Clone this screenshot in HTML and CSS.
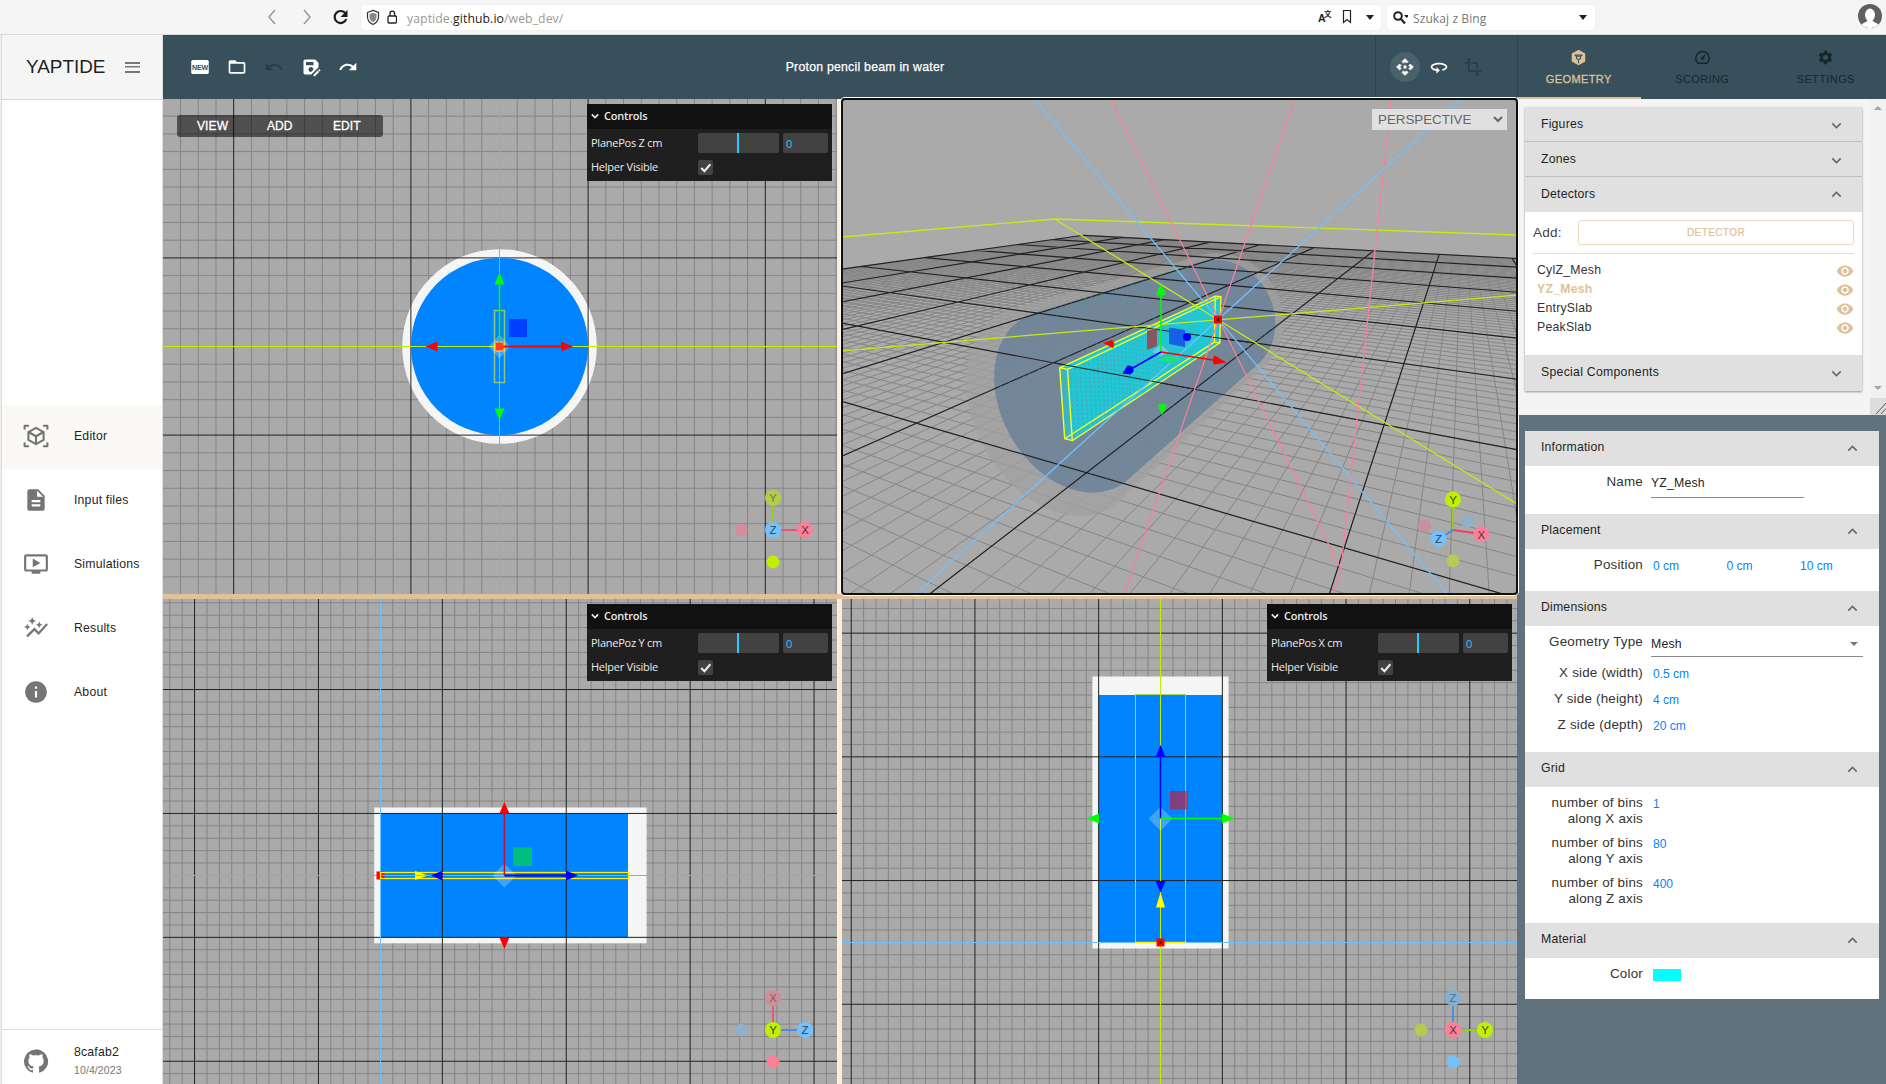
FILE: index.html
```html
<!DOCTYPE html>
<html lang="en">
<head>
<meta charset="utf-8">
<title>YAPTIDE</title>
<link rel="stylesheet" href="styles.css">
</head>
<body>
<svg class="defs" aria-hidden="true">
  <symbol id="i-down" viewBox="0 0 24 24"><path d="M16.59 8.59 12 13.17 7.41 8.59 6 10l6 6 6-6z"/></symbol>
  <symbol id="i-up" viewBox="0 0 24 24"><path d="M12 8l-6 6 1.41 1.41L12 10.83l4.59 4.58L18 14z"/></symbol>
  <symbol id="i-eye" viewBox="0 0 24 24"><path d="M12 4.5C7 4.5 2.73 7.61 1 12c1.73 4.39 6 7.5 11 7.5s9.27-3.11 11-7.5c-1.73-4.39-6-7.5-11-7.5zM12 17c-2.76 0-5-2.24-5-5s2.24-5 5-5 5 2.24 5 5-2.24 5-5 5zm0-8c-1.66 0-3 1.34-3 3s1.34 3 3 3 3-1.34 3-3-1.34-3-3-3z"/></symbol>
</svg>

<header class="browser">
  <svg class="nav-icons" viewBox="0 0 100 34">
    <path class="dim" d="M14 10l-6 7 6 7M43 10l6 7-6 7"/>
    <path class="dark" d="M84.500 13.500a6 6 0 1 0 .8 5.500"/><path class="solid" d="M86.500 10v7h-7z"/>
  </svg>
  <div class="url">
    <svg viewBox="0 0 36 24" width="36" height="24">
      <path d="M6.500 6.500l5.500-2 5.500 2v4.500c0 4-2.500 6-5.500 7.500-3-1.500-5.500-3.500-5.500-7.500z" fill="#fff" stroke="#333" stroke-width="1.200"/>
      <path d="M8.500 8l3.500-1.300L15.500 8v3c0 2.600-1.600 4.200-3.500 5.300C10.100 15.200 8.500 13.600 8.500 11z" fill="#888"/>
      <rect x="27" y="10" width="8.500" height="7" rx="1" fill="none" stroke="#222" stroke-width="1.300"/>
      <path d="M29 10V7.500a2.300 2.300 0 0 1 4.600 0V10" fill="none" stroke="#222" stroke-width="1.300"/>
    </svg>
    <span class="addr">yaptide.<b>github.io</b>/web_dev/</span>
    <svg class="url-tools" viewBox="0 0 64 24" width="64" height="24">
      <text x="1" y="16" class="tr1">A</text><text x="7" y="11" class="tr2">文</text>
      <path d="M26.500 4.500h7v12l-3.500-3-3.500 3z" fill="none" stroke="#222" stroke-width="1.200"/>
      <path d="M49 9h8l-4 5z" fill="#222"/>
    </svg>
  </div>
  <div class="search">
    <svg viewBox="0 0 20 24" width="20" height="24"><circle cx="10" cy="10" r="3.800" fill="none" stroke="#222" stroke-width="2"/><path d="M13 13l4 4.500" stroke="#222" stroke-width="2.200"/><path d="M16 9h5l-2.500 3z" fill="#222"/></svg>
    <span>Szukaj z Bing</span>
    <svg class="caret" viewBox="0 0 10 24" width="10" height="24"><path d="M1 9h8l-4 5z" fill="#222"/></svg>
  </div>
  <svg class="avatar" viewBox="0 0 24 24"><circle cx="12" cy="12" r="12" fill="#5f5f5f"/><ellipse cx="12" cy="11" rx="5" ry="6.500" fill="#fff"/><path d="M3.500 20.500c3-2.500 5-2.500 6-4h5c1 1.500 3 1.500 6 4a12 12 0 0 1-17 0z" fill="#fff"/></svg>
</header>

<div class="app">
  <aside class="side">
    <div class="brand"><span>YAPTIDE</span><i class="burger"></i></div>
    <nav>
      <a class="on"><svg viewBox="0 0 24 24"><g fill="none" stroke="currentColor" stroke-width="1.900"><path d="M1.500 6V2.500H5.500M18.500 2.500h4V6M22.500 18v3.500h-4M5.500 21.500h-4V18" stroke-linejoin="round"/><path d="M12 4.500l7 3.800v7.400l-7 3.800-7-3.800V8.300zM5 8.300l7 3.900 7-3.900M12 12v7.500"/></g></svg>Editor</a>
      <a><svg viewBox="0 0 24 24"><path d="M14 2H6c-1.100 0-1.990.9-1.990 2L4 20c0 1.100.89 2 1.990 2H18c1.100 0 2-.9 2-2V8l-6-6zm2 16H8v-2h8v2zm0-4H8v-2h8v2zm-3-5V3.500L18.500 9H13z"/></svg>Input files</a>
      <a><svg viewBox="0 0 24 24"><path d="M21 3H3c-1.110 0-2 .89-2 2v12c0 1.100.89 2 2 2h5v2h8v-2h5c1.100 0 1.990-.9 1.990-2L23 5c0-1.110-.9-2-2-2zm0 14H3V5h18v12zm-5-6l-7 4V7z"/></svg>Simulations</a>
      <a><svg viewBox="0 0 24 24"><path d="M14.060 9.940 12 9l2.060-.94L15 6l.94 2.060L18 9l-2.060.94L15 12zM4 14l.94-2.060L7 11l-2.060-.94L4 8l-.94 2.060L1 11l2.060.94zm4.500-5 1.090-2.410L12 5.500 9.590 4.410 8.500 2 7.410 4.410 5 5.500l2.410 1.090zm-4 11.500 6-6.010 4 4L23 8.930l-1.410-1.410-7.090 7.970-4-4L3 19z"/></svg>Results</a>
      <a><svg viewBox="0 0 24 24"><path d="M12 2C6.480 2 2 6.480 2 12s4.480 10 10 10 10-4.480 10-10S17.520 2 12 2zm1 15h-2v-6h2v6zm0-8h-2V7h2v2z"/></svg>About</a>
    </nav>
    <div class="build">
      <svg viewBox="0 0 24 24"><path d="M12 1.270a11 11 0 00-3.480 21.460c.55.09.73-.28.73-.55v-1.840c-3.030.64-3.670-1.460-3.670-1.460-.55-1.290-1.280-1.650-1.280-1.650-.92-.65.1-.65.1-.65 1.100 0 1.730 1.100 1.730 1.100.92 1.650 2.570 1.200 3.210.92a2 2 0 01.64-1.470c-2.470-.27-5.040-1.190-5.040-5.500 0-1.100.46-2.100 1.200-2.840a3.760 3.760 0 010-2.930s.91-.28 3.110 1.100c1.800-.49 3.700-.49 5.500 0 2.100-1.380 3.020-1.100 3.020-1.100a3.760 3.760 0 01.1 2.930c.83.74 1.200 1.740 1.200 2.940 0 4.210-2.570 5.130-5.040 5.400.45.37.82.92.82 2.020v3.030c0 .27.1.64.73.55A11 11 0 0012 1.270"/></svg>
      <div><p>8cafab2</p><p class="date">10/4/2023</p></div>
    </div>
  </aside>

  <main class="editor">
    <div class="toolbar">
      <div class="file-tools">
        <svg viewBox="0 0 24 24"><rect x="1.500" y="3.500" width="21" height="17" rx="2"/><text x="12" y="15.200" class="new">NEW</text></svg>
        <svg viewBox="0 0 24 24"><path d="M20 6h-8l-2-2H4c-1.100 0-1.990.9-1.990 2L2 18c0 1.100.9 2 2 2h16c1.100 0 2-.9 2-2V8c0-1.100-.9-2-2-2zm0 12H4V8h16v10z"/></svg>
        <svg class="off" viewBox="0 0 24 24"><path d="M12.500 8c-2.650 0-5.050.99-6.900 2.600L2 7v9h9l-3.620-3.620c1.390-1.160 3.160-1.880 5.120-1.880 3.540 0 6.550 2.310 7.600 5.500l2.370-.78C21.080 11.030 17.150 8 12.500 8z"/></svg>
        <svg viewBox="0 0 24 24"><path d="M21 12.400V7l-4-4H5c-1.110 0-2 .9-2 2v14c0 1.100.89 2 2 2h7.400l8.600-8.600zM15 15c0 .02 0 .04 0 .06L12.060 18c-.02 0-.04 0-.06 0-1.660 0-3-1.340-3-3s1.340-3 3-3 3 1.340 3 3zM6 6h9v4H6V6zm13.990 10.250 1.770 1.770L16.770 23H15v-1.770l4.990-4.980zm3.260.26-.85.85-1.770-1.770.85-.85c.2-.2.51-.2.71 0l1.060 1.060c.2.2.2.52 0 .71z"/></svg>
        <svg viewBox="0 0 24 24"><path d="M18.400 10.600C16.550 8.990 14.150 8 11.500 8c-4.650 0-8.580 3.030-9.960 7.220L3.900 16c1.050-3.190 4.050-5.500 7.600-5.500 1.950 0 3.730.72 5.120 1.880L13 16h9V7l-3.600 3.600z"/></svg>
      </div>
      <h1>Proton pencil beam in water</h1>
      <div class="mode-tools">
        <span class="active"><svg viewBox="0 0 24 24"><path d="M15.540 5.540L13.770 7.300 12 5.540 10.230 7.300 8.460 5.540 12 2zm2.920 10l-1.760-1.770L18.460 12l-1.760-1.770 1.760-1.770L22 12zm-10 2.920l1.770-1.760L12 18.460l1.770-1.760 1.770 1.760L12 22zm-2.920-10l1.760 1.770L5.540 12l1.760 1.770-1.760 1.770L2 12z" stroke="currentColor" stroke-width="1"/><circle cx="12" cy="12" r="2"/></svg></span>
        <span><svg viewBox="0 0 24 24"><path d="M12 7C6.480 7 2 9.240 2 12c0 2.240 2.940 4.130 7 4.770V20l4-4-4-4v2.730c-3.150-.56-5-1.900-5-2.730 0-1.060 3.040-3 8-3s8 1.940 8 3c0 .73-1.460 1.890-4 2.530v2.050c3.530-.77 6-2.530 6-4.580 0-2.760-4.480-5-10-5z"/></svg></span>
        <span class="off"><svg viewBox="0 0 24 24"><path d="M22 18v-2H8V4h2L7 1 4 4h2v2H2v2h4v8c0 1.100.9 2 2 2h8v2h-2l3 3 3-3h-2v-2h4zM10 8h6v6h2V8c0-1.100-.9-2-2-2h-6v2z"/></svg></span>
      </div>
    </div>

    <div class="views">
      <section class="view">
        <svg viewBox="163 99 674 495">
          <g data-grid="499.500 346.500 17.720"></g>
          <circle cx="499.500" cy="346.500" r="97.300" fill="#f5f5f5"/>
          <g data-major="499.500 346.500 17.720"></g>
          <circle cx="499.500" cy="346.500" r="88.600" fill="#0084ff"/>
          <path d="M499.500 99v495" stroke="#fb7f9b"/>
          <path d="M163 346.500h674" stroke="#bdef00"/>
          <rect x="494.500" y="310.500" width="10" height="72" fill="none" stroke="#8cc878" stroke-width="1.500"/>
          <rect x="509" y="319" width="18" height="18" fill="#0040ff"/>
          <path d="M499.500 334.500l11 12-11 12-11-12z" fill="#fff" opacity=".25"/>
          <path d="M494 346l2-4h7l2 4-2 5h-7z" fill="#ffd9a0" stroke="#fff000"/>
          <path d="M499.500 346V284" stroke="#0f0" stroke-width="1.500"/><path d="M499.500 273l5 11.500h-10zM499.500 420l5-11.500h-10z" fill="#0f0"/>
          <path d="M499.500 346.500H562" stroke="red" stroke-width="2"/><path d="M573 346.500l-12-5v10zM425.500 346.500l12-5v10z" fill="red"/>
          <rect x="495.500" y="342.500" width="8" height="8" fill="#ff3b30"/>
          <g class="axes"><path d="M773 530V498" stroke="#8ed01a"/><path d="M773 530h32" stroke="#f2506e"/>
            <circle cx="741" cy="530" r="6.500" fill="#d48d9c"/><circle cx="773" cy="562" r="6.500" fill="#c0ef00"/>
            <circle cx="773" cy="498" r="8" fill="#b5cb4c"/><circle cx="805" cy="530" r="8" fill="#ff7f98"/><circle cx="773" cy="530" r="8" fill="#73c2ff"/>
            <text class="far" x="773" y="502.300">Y</text><text x="805" y="534.300">X</text><text x="773" y="534.300">Z</text></g>
        </svg>
        <div class="view-menu"><span>VIEW</span><span>ADD</span><span>EDIT</span></div>
        <div class="gui"><h2><svg viewBox="0 0 10 10"><path d="M1 3l4 4 4-4"/></svg>Controls</h2><div class="row"><label>PlanePos Z cm</label><i class="slider"></i><i class="num">0</i></div><div class="row"><label>Helper Visible</label><i class="check"><svg viewBox="0 0 14 14"><path d="M3 7.500l3 3 5.500-6.500"/></svg></i></div></div>
      </section>
      <i class="split-v"></i>
      <section class="view focus">
        <svg viewBox="842 99 675 495">
          <g id="scene"></g>
          <g fill="none" stroke="#c3ec10" stroke-width="1.300"><path d="M842 237l212.700-18L1517 235M1054.700 219L1517 504M842 350.800L1517 295.200"/></g>
          <g fill="none" stroke="#fb7f9b" stroke-width="1.250"><path d="M1111 99l229.900 470.300M1294.300 99L1124.500 594M1391.300 99l-50.400 470.300-8 25"/></g>
          <g fill="none" stroke="#70c2ff" stroke-width="1.300"><path d="M1034.500 99L1447.500 594M1461 99L916 594"/></g>
          <g id="gizmo">
            <path d="M1147 331l10-3v18l-10 4z" fill="#8b5560"/><path d="M1169 327.500l16 2.500v17l-16-3z" fill="#1460e6"/>
            <path d="M1157 360l10-4 15 2-10 5z" fill="#1fe07a"/><path d="M1152 352l9-8 8 8-8 4z" fill="#7fd7e4" opacity=".7"/>
            <path d="M1161 352V295" stroke="#0f0" stroke-width="1.600"/><path d="M1161 284l5 10q-5 3-10 0zM1162 415l5-10q-5-2-9 0z" fill="#0f0"/>
            <path d="M1161 352l52 8" stroke="red" stroke-width="1.600"/><path d="M1226.500 362.500l-12-7q-3 5-.5 9zM1103 343l9-3q4 3 1 8z" fill="red"/>
            <path d="M1161 352l-30 17" stroke="#00f" stroke-width="1.600"/><path d="M1122.500 373.500l5-8q7-1 6 6l-3 3z" fill="#00f"/><ellipse cx="1187" cy="337" rx="4" ry="4" fill="#00f"/>
            <rect x="1214" y="315.500" width="8" height="8" fill="red"/><rect x="1216.700" y="318.200" width="2.500" height="3" fill="#300"/>
          </g>
          <g class="axes"><path d="M1453 530v-30" stroke="#8ed01a"/><path d="M1453 530l28 4" stroke="#f2405e"/><path d="M1453 530l-14 9" stroke="#3a8fe8"/>
            <circle cx="1424.600" cy="525.700" r="6.500" fill="#c98f9b"/><circle cx="1467.600" cy="521.700" r="6.500" fill="#8fb0c8"/><circle cx="1453" cy="560.700" r="6.500" fill="#b5cb55"/>
            <circle cx="1453" cy="499.500" r="8" fill="#c0ef00"/><circle cx="1481.300" cy="534.300" r="8" fill="#ff7f98"/><circle cx="1438.600" cy="538.700" r="8" fill="#73c2ff"/>
            <text x="1453" y="503.800">Y</text><text x="1481.300" y="538.600">X</text><text x="1438.600" y="543">Z</text></g>
        </svg>
        <div class="camera">PERSPECTIVE<svg viewBox="0 0 10 10"><path d="M1 3l4 4 4-4"/></svg></div>
      </section>

      <i class="split-h"></i>

      <section class="view">
        <svg viewBox="163 599 674 485">
          <g data-grid="380.400 875.400 12.390"></g>
          <rect x="374.200" y="807.500" width="272.400" height="135.800" fill="#f5f5f5"/>
          <rect x="380.500" y="813.500" width="247.500" height="124" fill="#0084ff"/>
          <g data-major="380.400 875.400 12.390"></g>
          <path d="M163 875.500h674" stroke="#fb7f9b"/><path d="M380.500 599v485" stroke="#70c2ff"/>
          <rect x="376.500" y="871.500" width="8" height="8" fill="red"/>
          <rect x="380.500" y="872.500" width="248" height="6" fill="none" stroke="#fff000" stroke-width="1.300"/>
          <path d="M428 875.500l-13-4.500v9z" fill="#ff0"/>
          <path d="M381 875.500h247" stroke="#b39bc8" stroke-width=".8"/>
          <rect x="513.500" y="847.500" width="18.500" height="18.500" fill="#00c080"/>
          <path d="M504.400 863.500l12 12-12 12-12-12z" fill="#fff" opacity=".25"/>
          <path d="M504.400 875V813" stroke="#c01030" stroke-width="1.500"/><path d="M504.400 802l5 11.500h-10zM504.400 949l5-11.500h-10z" fill="red"/>
          <path d="M504.400 875.500H567" stroke="#0000e0" stroke-width="2"/><path d="M578 875.500l-12-5v10zM431 875.500l11.500-5v10z" fill="#00f"/>
          <g class="axes"><path d="M773 1030v-32" stroke="#e65a74"/><path d="M773 1030h32" stroke="#4a90e2"/>
            <circle cx="741" cy="1030" r="6.500" fill="#8fb0c8"/><circle cx="773" cy="1062" r="6.500" fill="#ff7f98"/>
            <circle cx="773" cy="998" r="8" fill="#cf8d9b"/><circle cx="805" cy="1030" r="8" fill="#73c2ff"/><circle cx="773" cy="1030" r="8" fill="#c0ef00"/>
            <text class="far" x="773" y="1002.300">X</text><text x="805" y="1034.300">Z</text><text x="773" y="1034.300">Y</text></g>
        </svg>
        <div class="gui"><h2><svg viewBox="0 0 10 10"><path d="M1 3l4 4 4-4"/></svg>Controls</h2><div class="row"><label>PlanePoz Y cm</label><i class="slider"></i><i class="num">0</i></div><div class="row"><label>Helper Visible</label><i class="check"><svg viewBox="0 0 14 14"><path d="M3 7.500l3 3 5.500-6.500"/></svg></i></div></div>
      </section>
      <i class="split-v"></i>
      <section class="view">
        <svg viewBox="842 599 675 485">
          <g data-grid="1160.500 942.400 12.370"></g>
          <rect x="1092.400" y="676.500" width="136.200" height="272" fill="#f5f5f5"/>
          <rect x="1098.500" y="695" width="124" height="247.500" fill="#0084ff"/>
          <g data-major="1160.500 942.400 12.370"></g>
          <path d="M842 942.500h675" stroke="#70c2ff"/>
          <path d="M1160.500 599v485" stroke="#bdef00"/>
          <rect x="1135.500" y="694.500" width="50" height="248" fill="none" stroke="#a8dc50"/><path d="M1135 942.500h51" stroke="#fff000" stroke-width="1.400"/>
          <rect x="1156.500" y="938.500" width="8" height="8" fill="red"/><rect x="1159.500" y="941.500" width="2" height="2" fill="#400"/>
          <rect x="1170" y="791" width="18" height="18.300" fill="#80407f"/><path d="M1186 791v18" stroke="#d86040"/>
          <path d="M1160.500 806.700l12 12-12 12-12-12z" fill="#fff" opacity=".25"/>
          <path d="M1160.500 818.500V757" stroke="#0000e0" stroke-width="1.500"/><path d="M1160.500 745l5 12h-10zM1160.500 892.500l5-11.500h-10z" fill="#00f"/>
          <path d="M1160.500 892.500l4.500 15h-9z" fill="#ff0"/>
          <path d="M1160.500 818.500H1223" stroke="#0f0" stroke-width="1.700"/><path d="M1234.500 818.500l-12.500-5v10zM1087 818.500l12-5v10z" fill="#0f0"/>
          <g class="axes"><path d="M1453 1030v-32" stroke="#4a90e2"/><path d="M1453 1030h32" stroke="#8ed01a"/>
            <circle cx="1421" cy="1030" r="6.500" fill="#b5cb4c"/><circle cx="1453" cy="1062" r="6.500" fill="#73c2ff"/>
            <circle cx="1453" cy="998" r="8" fill="#84afd0"/><circle cx="1485" cy="1030" r="8" fill="#c0ef00"/><circle cx="1453" cy="1030" r="8" fill="#ff7f98"/>
            <text class="far" x="1453" y="1002.300">Z</text><text x="1485" y="1034.300">Y</text><text x="1453" y="1034.300">X</text></g>
        </svg>
        <div class="gui"><h2><svg viewBox="0 0 10 10"><path d="M1 3l4 4 4-4"/></svg>Controls</h2><div class="row"><label>PlanePos X cm</label><i class="slider"></i><i class="num">0</i></div><div class="row"><label>Helper Visible</label><i class="check"><svg viewBox="0 0 14 14"><path d="M3 7.500l3 3 5.500-6.500"/></svg></i></div></div>
      </section>
    </div>
  </main>

  <aside class="panel">
    <div class="tabs">
      <div class="tab sel"><svg viewBox="0 0 24 24"><path d="M12 1l9.500 5.300v11.400L12 23l-9.500-5.300V6.300z"/><path d="M6.500 8.500l3 2M17.500 8.500l-3 2M12 20v-5M9.300 10.300h5.400l.3 2.700-3 2.300-3-2.300zM6.500 8.500h11" fill="none" stroke="#38505c" stroke-width="1.500"/></svg>GEOMETRY</div>
      <div class="tab"><svg viewBox="0 0 24 24"><path d="M5.500 20a9.500 9.500 0 1 1 13 0z" fill="none" stroke="currentColor" stroke-width="2" stroke-linejoin="round"/><path d="M10.300 14.500a2 2 0 0 0 3 0L17 7l-6.500 4.700a2 2 0 0 0-.2 2.800z"/></svg>SCORING</div>
      <div class="tab"><svg viewBox="0 0 24 24"><path d="M19.140 12.940c.04-.3.06-.61.06-.94 0-.32-.02-.64-.07-.94l2.030-1.580c.18-.14.23-.41.12-.61l-1.920-3.320c-.12-.22-.37-.29-.59-.22l-2.390.96c-.5-.38-1.030-.7-1.620-.94l-.36-2.540c-.04-.24-.24-.41-.48-.41h-3.840c-.24 0-.43.17-.47.41l-.36 2.540c-.59.24-1.130.57-1.620.94l-2.390-.96c-.22-.08-.47 0-.59.22L2.740 8.870c-.12.21-.08.47.12.61l2.030 1.580c-.05.3-.09.63-.09.94s.02.64.07.94l-2.030 1.580c-.18.14-.23.41-.12.61l1.920 3.320c.12.22.37.29.59.22l2.390-.96c.5.38 1.030.7 1.620.94l.36 2.540c.05.24.24.41.48.41h3.840c.24 0 .44-.17.47-.41l.36-2.540c.59-.24 1.130-.56 1.620-.94l2.390.96c.22.08.47 0 .59-.22l1.920-3.320c.12-.22.07-.47-.12-.61l-2.010-1.580zM12 15.600c-1.980 0-3.600-1.620-3.600-3.600s1.620-3.600 3.600-3.600 3.600 1.620 3.600 3.600-1.620 3.600-3.600 3.600z"/></svg>SETTINGS</div>
    </div>

    <div class="tree">
      <div class="cards">
        <h3 class="line">Figures<svg><use href="#i-down"/></svg></h3>
        <h3 class="line">Zones<svg><use href="#i-down"/></svg></h3>
        <h3>Detectors<svg><use href="#i-up"/></svg></h3>
        <div class="detectors">
          <div class="add"><span>Add:</span><button>DETECTOR</button></div>
          <ul>
            <li>CylZ_Mesh<svg><use href="#i-eye"/></svg></li>
            <li class="picked">YZ_Mesh<svg><use href="#i-eye"/></svg></li>
            <li>EntrySlab<svg><use href="#i-eye"/></svg></li>
            <li>PeakSlab<svg><use href="#i-eye"/></svg></li>
          </ul>
        </div>
        <h3 class="last">Special Components<svg><use href="#i-down"/></svg></h3>
      </div>
      <div class="scroll"><i class="up"></i><i class="dn"></i><svg viewBox="0 0 16 17"><path d="M6 16L16 5M11 16l5-5.500" stroke="#555" fill="none"/></svg></div>
    </div>

    <div class="props">
      <h3>Information<svg><use href="#i-up"/></svg></h3>
      <div class="body info"><label>Name</label><span class="input">YZ_Mesh</span></div>
      <h3>Placement<svg><use href="#i-up"/></svg></h3>
      <div class="body place"><label>Position</label><span class="vec"><b>0 cm</b><b>0 cm</b><b>10 cm</b></span></div>
      <h3>Dimensions<svg><use href="#i-up"/></svg></h3>
      <div class="body dims">
        <label>Geometry Type</label><span class="select">Mesh<i></i></span>
        <label>X side (width)</label><b>0.5 cm</b>
        <label>Y side (height)</label><b>4 cm</b>
        <label>Z side (depth)</label><b>20 cm</b>
      </div>
      <h3>Grid<svg><use href="#i-up"/></svg></h3>
      <div class="body bins">
        <label>number of bins<br>along X axis</label><b>1</b>
        <label>number of bins<br>along Y axis</label><b>80</b>
        <label>number of bins<br>along Z axis</label><b>400</b>
      </div>
      <h3>Material<svg><use href="#i-up"/></svg></h3>
      <div class="body mat"><label>Color</label><i class="swatch"></i></div>
    </div>
  </aside>
</div>
<script src="scene.js"></script>
</body>
</html>
```
FILE: styles.css
```css
* { box-sizing: border-box; margin: 0; padding: 0; }
html, body { height: 100%; overflow: hidden; }
body { display: flex; flex-direction: column; background: #f5f5f5; color: #1f1f1f; font: 12.25px "Liberation Sans", Arial, sans-serif; letter-spacing: .2px; }
i, b { font-style: normal; }
svg { display: block; flex: none; fill: currentColor; }
.defs { position: absolute; width: 0; height: 0; }

/* browser chrome */
.browser { height: 35px; flex: none; display: flex; align-items: flex-start; background: #f5f5f5; border-bottom: 1px solid #dadada; padding-left: 261px; font-family: "Open Sans", sans-serif; font-size: 12px; }
.nav-icons { width: 100px; height: 34px; fill: none; }
.nav-icons path { fill: none; stroke-width: 1.5; }
.nav-icons .dim { stroke: #999; }
.nav-icons .dark { stroke: #1c1c1c; stroke-width: 2.2; }
.nav-icons .solid { fill: #1c1c1c; }
.url, .search { height: 25px; margin-top: 5px; background: #fff; border-radius: 3px; box-shadow: 0 0 1px #ccc; display: flex; align-items: center; }
.url { width: 1020px; }
.addr { color: #999; margin-left: 10px; letter-spacing: .1px; font-size: 12.2px; padding-top: 1px; }
.addr b { font-weight: 400; color: #222; }
.url-tools { margin-left: auto; }
.tr1 { font: 700 10.5px "Liberation Sans", sans-serif; fill: #222; letter-spacing: 0; }
.tr2 { font: 700 7.5px "Noto Sans CJK SC", sans-serif; fill: #222; letter-spacing: 0; }
.search { width: 208px; margin-left: 6px; padding-left: 1px; }
.search span { color: #777; margin-left: 5px; letter-spacing: .1px; font-size: 12px; padding-top: 1px; }
.caret { margin-left: auto; margin-right: 7px; }
.avatar { width: 24px; height: 24px; margin: 4px 0 0 263px; }

.app { flex: 1; display: flex; min-height: 0; }

/* sidebar */
.side { width: 163px; display: flex; flex-direction: column; border-left: 1px solid #eee; background: #fff; border-right: 1px solid #ddd; box-shadow: inset 1px 0 #ddd; flex: none; }
.brand { height: 65px; background: #f5f5f5; border-bottom: 1px solid #d6d6d6; display: flex; align-items: center; padding-left: 25px; font-size: 18.9px; letter-spacing: 0; box-shadow: inset 1px 0 #ddd; }
.brand span { width: 99px; padding-bottom: 1px; }
.burger { width: 15px; height: 11px; border: solid #777; border-width: 2px 0; background: linear-gradient(#777, #777) center / 100% 1.5px no-repeat; }
.side nav { margin-top: 305px; padding-left: 1px; flex: 1; }
.side nav a { height: 64px; display: flex; align-items: center; padding: 0 0 3px 21px; }
.side nav a.on { background: #fbf9f6; }
.side svg { width: 26px; height: 26px; color: #757575; }
.side nav svg { margin-right: 25px; }
.build { height: 55px; border-top: 1px solid #ddd; display: flex; align-items: center; padding: 8px 0 0 22px; gap: 25px; }
.build p { line-height: 18px; }
.build .date { font-size: 10.5px; color: #777; letter-spacing: .1px; }

/* editor */
.editor { width: 1354px; flex: none; display: flex; flex-direction: column; }
.toolbar { height: 64px; background: #38505c; color: #fff; display: flex; align-items: center; flex: none; }
.file-tools { width: 205px; display: flex; gap: 17px; padding-left: 27px; }
.file-tools svg, .mode-tools svg { width: 20px; height: 20px; }
.toolbar .off { color: #2a3c45; }
.new { font: 700 8.6px "Liberation Sans", sans-serif; fill: #38505c; text-anchor: middle; letter-spacing: -.2px; }
.toolbar h1 { flex: 1; text-align: center; font-size: 12.25px; font-weight: 400; letter-spacing: .25px; padding: 0 13px 1px 0; -webkit-text-stroke: .25px; }
.mode-tools { width: 142px; height: 100%; border-left: 1px solid #2f444e; display: flex; align-items: center; padding-left: 14px; gap: 4px; }
.mode-tools span { width: 30px; height: 30px; border-radius: 50%; display: grid; place-items: center; }
.mode-tools .active { background: #4b616c; }

.views { flex: 1; display: grid; grid-template-columns: 674px 5px 675px; grid-template-rows: 495px 5px 485px; }
.view { position: relative; background: #aaa; }
.view > svg { width: 100%; height: 100%; overflow: hidden; }
.split-v { background: #ffecd9; }
.split-h { background: #e0c199; grid-column: 1 / 4; }
.focus::after { content: ""; position: absolute; inset: -1px; border: 2px solid #101010; border-radius: 4px; box-shadow: 0 0 0 1px #fff; z-index: 2; }
.axes path { stroke-width: 2; }
.axes text { font: 11.5px "Liberation Sans", sans-serif; letter-spacing: 0; text-anchor: middle; fill: #222; opacity: .8; }
.axes .far { opacity: .45; }

.view-menu { position: absolute; left: 14px; top: 16px; width: 206px; height: 22px; display: flex; align-items: center; border-radius: 3px; background: rgba(0,0,0,.53); color: #fff; font-size: 12px; letter-spacing: .1px; -webkit-text-stroke: .3px; }
.view-menu span:nth-child(1) { padding-left: 20px; width: 90px; }
.view-menu span:nth-child(2) { width: 66px; }

.gui { position: absolute; right: 5px; top: 5px; width: 245px; height: 77px; background: #1f1f1f; color: #ebebeb; font: 11px "Open Sans", "Noto Sans", sans-serif; letter-spacing: 0; }
.gui h2 { height: 25px; background: #111; font-size: 11px; font-weight: 600; display: flex; align-items: center; gap: 5px; padding: 0 0 2px 4px; letter-spacing: -.2px; }
.gui h2 svg { width: 8px; height: 10px; }
.gui path, .camera path { fill: none; stroke: currentColor; stroke-width: 2; }
.gui .row { display: flex; height: 20px; margin-top: 4px; align-items: center; padding-left: 4px; }
.gui label { width: 107px; letter-spacing: -.25px; padding-bottom: 2px; }
.slider { width: 81px; height: 20px; border-radius: 2px; background: linear-gradient(#2cc9ff, #2cc9ff) 39px 0 / 2px 100% no-repeat #424242; }
.num { width: 45px; height: 20px; margin-left: 4px; border-radius: 2px; background: #424242; color: #2cc9ff; padding-left: 3px; line-height: 21px; }
.check { width: 15px; height: 15px; border-radius: 2px; background: #424242; }
.gui .row + .row { height: 15px; margin-top: 7px; }
.camera { position: absolute; left: 530px; top: 10px; width: 135px; height: 21px; background: #e0e0e0; color: #666; font-size: 13.33px; letter-spacing: 0; display: flex; align-items: center; justify-content: space-between; padding: 0 4px 1px 6px; }
.camera svg { width: 10px; height: 10px; }

/* right panel */
.panel { flex: 1; background: #60737c; display: flex; flex-direction: column; }
.tabs { height: 64px; background: #38505c; display: flex; color: #17262d; flex: none; box-shadow: inset 1px 0 #2f444e; }
.tab { width: 123.5px; padding: 14px 0 0; display: flex; flex-direction: column; align-items: center; gap: 7px; font-size: 11px; letter-spacing: .4px; }
.tab svg { width: 17px; height: 17px; }
.tab.sel { color: #dfc199; border-bottom: 2px solid #dfc199; -webkit-text-stroke: .3px; }
.tree { height: 316px; background: #f4f4f4; display: flex; flex: none; padding: 8px 0 0 8px; }
.cards { width: 337px; height: 284px; background: #fff; box-shadow: 0 1px 2px rgba(0,0,0,.4); }
.scroll { width: 16px; margin: -8px 0 0 8px; background: #f1f1f1; display: flex; flex-direction: column; align-items: center; }
.scroll .up, .scroll .dn { border: 4px solid transparent; border-bottom-color: #a3a3a3; margin-top: 3px; }
.scroll .dn { border-color: #a3a3a3 transparent transparent; margin-top: auto; margin-bottom: 4px; }
.scroll svg { width: 16px; height: 17px; background: #ddd; }
h3 { height: 35px; background: #e0e0e0; font-size: 12.25px; font-weight: 400; display: flex; align-items: center; justify-content: space-between; padding: 0 16px 2px; }
h3 svg { width: 19px; height: 19px; color: #666; margin-top: 2px; }
.line { border-bottom: 1px solid #bfbfbf; padding-bottom: 0; }
.last { height: 36px; letter-spacing: .28px; }
.detectors { height: 143px; padding: 8px 8px 0; }
.add { display: flex; align-items: center; height: 34px; border-bottom: 1px solid #ddd; padding-bottom: 8px; font-size: 13.6px; color: #444; }
.add span { width: 45px; }
.add button { flex: 1; height: 25px; border: 1px solid #ecd9be; border-radius: 3px; background: #fff; color: #dfc199; font: 10px "Liberation Sans", sans-serif; letter-spacing: .4px; -webkit-text-stroke: .2px; }
.detectors ul { list-style: none; padding: 6px 0 0 4px; }
.detectors li { height: 19px; display: flex; justify-content: space-between; align-items: center; color: #333; letter-spacing: .25px; }
.detectors li svg { width: 18px; height: 18px; color: #dfc199; margin-top: 2px; }
.detectors .picked { color: #dfc199; font-weight: 700; }

.props { margin: 16px 7px 0 8px; background: #fff; width: 354px; }
.props h3 { padding: 0 17px 3px 16px; }
.body { display: grid; grid-template-columns: 118px 1fr; column-gap: 8px; align-content: start; }
.body label { text-align: right; font-size: 13.4px; color: #333; letter-spacing: .2px; white-space: nowrap; line-height: 16px; }
.body b { font-weight: 400; color: #0084ff; font-size: 12px; letter-spacing: 0; padding-left: 2px; line-height: 19px; }
.info { height: 48px; padding-top: 8px; }
.input { width: 153px; height: 24px; border-bottom: 1px solid #8c8c8c; line-height: 19px; }
.place { height: 42px; padding-top: 8px; }
.place .vec { display: grid; grid-template-columns: 73.5px 73.5px 1fr; line-height: 19px; }
.dims { height: 126px; padding-top: 8px; grid-template-rows: 28px 26px 26px 26px; }
.dims label:nth-of-type(n+2) { padding-top: 3px; }
.dims b { padding-top: 3px; }
.select { width: 212px; height: 23px; border-bottom: 1px solid #8c8c8c; display: flex; justify-content: space-between; padding: 3px 5px 0 0; }
.select i { width: 0; border: 4px solid transparent; border-top-color: #777; height: 0; margin-top: 5px; }
.bins { height: 136px; padding-top: 8px; grid-template-rows: 40px 40px 40px; }
.mat { height: 41px; padding-top: 8px; }
.swatch { width: 28px; height: 12px; background: #0ff; margin: 3px 0 0 2px; }
```
FILE: scene.js
```js
const NS = 'http://www.w3.org/2000/svg';
const add = (parent, d, attrs) => {
  const p = document.createElementNS(NS, 'path');
  p.setAttribute('d', d);
  for (const k in attrs) p.setAttribute(k, attrs[k]);
  parent.appendChild(p);
};

// Orthographic views: 1 cm minor cells, major lines every 10 cm starting at 5 cm.
function flatGrid(g, spec, major) {
  const [cx, cy, step] = spec.split(' ').map(Number);
  const [x0, y0, w, h] = g.closest('svg').getAttribute('viewBox').split(' ').map(Number);
  let d = '';
  for (let i = -60; i <= 60; i++) {
    const isMajor = (((i - 5) % 10) + 10) % 10 === 0;
    if (isMajor !== major) continue;
    const x = cx + i * step, y = cy + i * step;
    if (x > x0 && x < x0 + w) d += `M${x} ${y0}v${h}`;
    if (y > y0 && y < y0 + h) d += `M${x0} ${y}h${w}`;
  }
  add(g, d, { fill: 'none', stroke: major ? '#222' : '#858585', 'stroke-width': 1 });
}
document.querySelectorAll('[data-grid]').forEach(g => flatGrid(g, g.dataset.grid, false));
document.querySelectorAll('[data-major]').forEach(g => flatGrid(g, g.dataset.major, true));

// Perspective camera, 50 degree vertical field of view.
const cam = { x: 16.78, y: 11.05, z: 39.97, yaw: 27 * Math.PI / 180, pitch: 17.22 * Math.PI / 180, f: 530.8, cx: 1179.5, cy: 346.5 };
const sY = Math.sin(cam.yaw), cY = Math.cos(cam.yaw), sP = Math.sin(cam.pitch), cP = Math.cos(cam.pitch);
function toCam(x, y, z) {
  const X = x - cam.x, Y = y - cam.y, Z = z - cam.z;
  const r = X * cY - Z * sY, d = -X * sY - Z * cY;
  return [r, d * sP + Y * cP, d * cP - Y * sP];
}
const proj = c => [cam.cx + cam.f * c[0] / c[2], cam.cy - cam.f * c[1] / c[2]];
const pt = (x, y, z) => proj(toCam(x, y, z));
function seg(a, b) {
  let A = toCam(...a), B = toCam(...b);
  const near = 2;
  if (A[2] < near && B[2] < near) return '';
  const cut = (P, Q) => { const t = (near - P[2]) / (Q[2] - P[2]); return P.map((v, i) => v + t * (Q[i] - v)); };
  if (A[2] < near) A = cut(A, B);
  if (B[2] < near) B = cut(B, A);
  const p = proj(A), q = proj(B);
  return `M${p[0].toFixed(2)} ${p[1].toFixed(2)}L${q[0].toFixed(2)} ${q[1].toFixed(2)}`;
}
function ground(step) {
  let d = '';
  for (let i = -55; i <= 55; i += step) d += seg([i, 0, -55], [i, 0, 55]) + seg([-55, 0, i], [55, 0, i]);
  return d;
}
function cylinder(r, z0, z1) {
  const p = [];
  for (let a = 0; a < 360; a += 6) for (const z of [z0, z1]) p.push(pt(r * Math.cos(a * Math.PI / 180), r * Math.sin(a * Math.PI / 180), z));
  p.sort((a, b) => a[0] - b[0] || a[1] - b[1]);
  const cross = (o, a, b) => (a[0] - o[0]) * (b[1] - o[1]) - (a[1] - o[1]) * (b[0] - o[0]);
  const half = pts => { const h = []; for (const q of pts) { while (h.length > 1 && cross(h[h.length - 2], h[h.length - 1], q) <= 0) h.pop(); h.push(q); } h.pop(); return h; };
  return 'M' + half(p).concat(half(p.slice().reverse())).map(q => q[0].toFixed(1) + ' ' + q[1].toFixed(1)).join('L') + 'Z';
}
const scene = document.getElementById('scene');
add(scene, ground(1), { fill: 'none', stroke: '#868686', 'stroke-width': 1 });
add(scene, cylinder(5.5, -.5, 21.5), { fill: '#a0a0a0', opacity: .75 });
add(scene, cylinder(5, 0, 20), { fill: '#708399', opacity: .93 });
add(scene, ground(10), { fill: 'none', stroke: '#222', 'stroke-width': 1.2 });
// facet edges of the phantom show as sparse green specks
for (let a = 0; a < 360; a += 15) {
  const c = 4.95 * Math.cos(a * Math.PI / 180), s = 4.95 * Math.sin(a * Math.PI / 180);
  add(scene, seg([c, s, .3], [c, s, 19.7]), { stroke: a % 45 ? '#22b455' : '#22aabb', 'stroke-width': 1, 'stroke-dasharray': '1.3 9 1 5 1.3 14', 'stroke-dashoffset': a * 1.7, opacity: .8 });
}
const quad = ps => 'M' + ps.map(p => pt(...p).map(v => v.toFixed(1)).join(' ')).join('L') + 'Z';
const X = .25, Y = 2;
add(scene, quad([[X, Y, 20], [X, Y, 0], [X, -Y, 0], [X, -Y, 20]]), { fill: '#22c6d4' });
add(scene, quad([[-X, Y, 20], [X, Y, 20], [X, -Y, 20], [-X, -Y, 20]]), { fill: '#3cb4c4' });
add(scene, quad([[-X, Y, 20], [X, Y, 20], [X, Y, 0], [-X, Y, 0]]), { fill: '#22c6d4' });
// mesh bins fade out with distance
for (let z = 19.8; z > 5; z -= .4) {
  const a = pt(X, Y - .1, z), b = pt(X, -Y + .1, z);
  add(scene, `M${a}L${b}`, { stroke: '#6d8d9c', 'stroke-width': 1, 'stroke-dasharray': '1.8 2.7', opacity: (z - 3) / 18, 'stroke-dashoffset': z * 5.3 });
}
let e = '';
for (const s of [-X, X]) for (const t of [-Y, Y]) e += seg([s, t, 0], [s, t, 20]);
for (const z of [0, 20]) e += quad([[-X, Y, z], [X, Y, z], [X, -Y, z], [-X, -Y, z]]);
add(scene, e, { fill: 'none', stroke: '#f4ff20', 'stroke-width': 1.4 });
// ground lines crossing in front of the detector
add(scene, seg([-5, 0, 15], [5, 0, 15]) + seg([-5, 0, 5], [5, 0, 5]), { fill: 'none', stroke: '#222', 'stroke-width': 1 });
```
